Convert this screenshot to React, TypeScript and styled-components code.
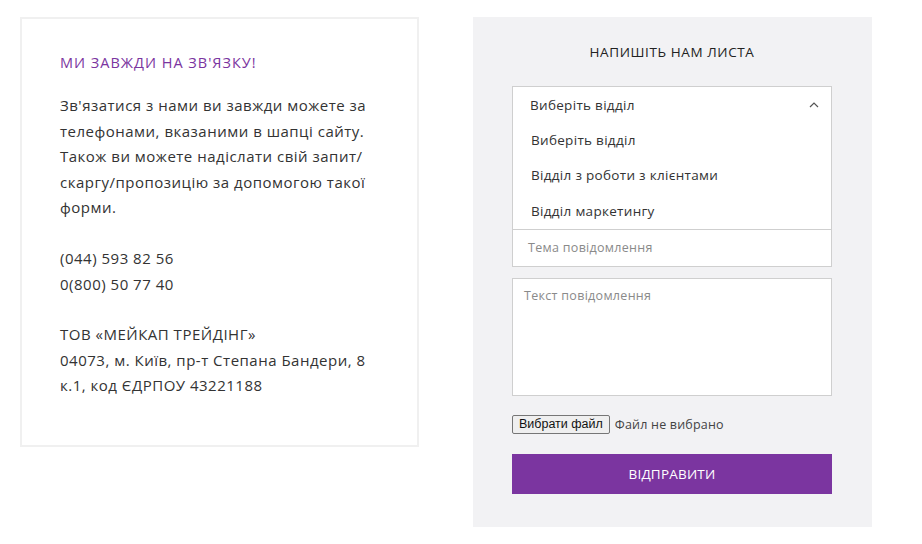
import React from "react";
import styled, { createGlobalStyle } from "styled-components";

const Global = createGlobalStyle`
  html, body { margin: 0; padding: 0; background: #fff; }
  body { font-family: "Open Sans", "Noto Sans", sans-serif; }
  * { box-sizing: border-box; }
`;

const Page = styled.div`
  display: flex;
  align-items: flex-start;
  gap: 54px;
  padding: 17px 0 0 20px;
  width: 922px;
  height: 544px;
`;

const InfoCard = styled.section`
  width: 399px;
  height: 430px;
  border: 2px solid #f0f0f0;
  padding: 34px 30px 0 38px;
  color: #333;
`;

const InfoTitle = styled.h2`
  margin: 0 0 21px 0;
  font-size: 14.5px;
  font-weight: 400;
  color: #7b35a0;
  text-transform: uppercase;
  letter-spacing: 1px;
`;

const Para = styled.p`
  margin: 0 0 25px 0;
  font-size: 15px;
  line-height: 25.6px;
  letter-spacing: 0.5px;
  color: #333;
`;

const FormPanel = styled.section`
  width: 399px;
  height: 510px;
  background: #f2f2f4;
  padding: 26px 40px 0 39px;
  display: flex;
  flex-direction: column;
`;

const FormTitle = styled.h3`
  margin: 0 0 25px 0;
  text-align: center;
  font-size: 13.5px;
  font-weight: 400;
  color: #222;
  text-transform: uppercase;
  letter-spacing: 0.6px;
`;

const SelectBox = styled.div`
  background: #fff;
  border: 1px solid #cfcfcf;
  border-bottom: none;
`;

const SelectHead = styled.div`
  height: 35px;
  display: flex;
  align-items: center;
  justify-content: space-between;
  padding: 0 12px 0 17px;
  font-size: 13.5px;
  letter-spacing: 0.3px;
  color: #333;
`;

const Option = styled.div`
  height: 35.5px;
  display: flex;
  align-items: center;
  padding-left: 18px;
  font-size: 13.5px;
  letter-spacing: 0.3px;
  color: #333;
`;

const OptionList = styled.div`
  padding-bottom: 0;
`;

const TextInput = styled.div`
  height: 38px;
  background: #fff;
  border: 1px solid #cfcfcf;
  display: flex;
  align-items: center;
  padding-left: 15px;
  font-size: 12.5px;
  letter-spacing: 0.3px;
  color: #8a8a8a;
  margin-bottom: 11px;
`;

const TextArea = styled.div`
  height: 118px;
  background: #fff;
  border: 1px solid #cfcfcf;
  padding: 8px 11px;
  font-size: 12.5px;
  letter-spacing: 0.3px;
  color: #8a8a8a;
  margin-bottom: 19px;
`;

const FileRow = styled.div`
  display: flex;
  align-items: center;
  gap: 5px;
  margin-bottom: 20px;
`;

const FileButton = styled.button`
  height: 19px;
  padding: 0 6px;
  border: 1px solid #767676;
  border-radius: 2px;
  background: #efefef;
  font-family: "Liberation Sans", Arial, sans-serif;
  font-size: 12.5px;
  color: #111;
`;

const FileLabel = styled.span`
  font-size: 12.5px;
  letter-spacing: 0.2px;
  color: #444;
`;

const Submit = styled.button`
  height: 40px;
  width: 100%;
  border: none;
  background: #7b35a0;
  color: #fff;
  font-family: inherit;
  font-size: 13.5px;
  text-transform: uppercase;
  letter-spacing: 0.2px;
`;

export default function App() {
  return (
    <>
      <Global />
      <Page>
        <InfoCard>
          <InfoTitle>Ми завжди на зв'язку!</InfoTitle>
          <Para>
            Зв'язатися з нами ви завжди можете за телефонами, вказаними в шапці сайту. Також ви можете надіслати свій запит/ скаргу/пропозицію за допомогою такої форми.
          </Para>
          <Para>
            (044) 593 82 56
            <br />
            0(800) 50 77 40
          </Para>
          <Para>
            ТОВ «МЕЙКАП ТРЕЙДІНГ»
            <br />
            04073, м. Київ, пр-т Степана Бандери, 8 к.1, код ЄДРПОУ 43221188
          </Para>
        </InfoCard>
        <FormPanel>
          <FormTitle>Напишіть нам листа</FormTitle>
          <SelectBox>
            <SelectHead>
              <span>Виберіть відділ</span>
              <svg width="10" height="7" viewBox="0 0 10 7">
                <polyline points="1,6 5,2 9,6" fill="none" stroke="#555" strokeWidth="1.2" />
              </svg>
            </SelectHead>
            <OptionList>
              <Option>Виберіть відділ</Option>
              <Option>Відділ з роботи з клієнтами</Option>
              <Option>Відділ маркетингу</Option>
            </OptionList>
          </SelectBox>
          <TextInput>Тема повідомлення</TextInput>
          <TextArea>Текст повідомлення</TextArea>
          <FileRow>
            <FileButton type="button">Вибрати файл</FileButton>
            <FileLabel>Файл не вибрано</FileLabel>
          </FileRow>
          <Submit type="button">Відправити</Submit>
        </FormPanel>
      </Page>
    </>
  );
}
